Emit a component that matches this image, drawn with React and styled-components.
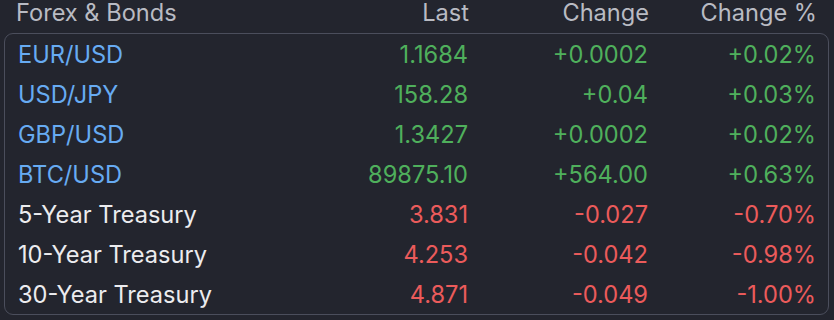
import React from 'react';
import styled, { createGlobalStyle } from 'styled-components';

const GlobalStyle = createGlobalStyle`
  html, body {
    margin: 0;
    background: #23252e;
  }
  body {
    font-family: Inter, "Noto Sans", sans-serif;
  }
`;

const Wrapper = styled.div`
  width: 834px;
  height: 320px;
  box-sizing: border-box;
  padding: 0 5px 0 4px;
  background: #23252e;
`;

const Header = styled.div`
  display: grid;
  grid-template-columns: 1fr 150px 180px 168px;
  height: 33px;
  align-items: start;
  padding: 0 12px;
  box-sizing: border-box;
  font-size: 23.6px;
  line-height: 25px;
  color: #b9bbc3;
`;

const HeaderCell = styled.div`
  text-align: ${(p) => (p.$left ? 'left' : 'right')};
  white-space: nowrap;
`;

const Panel = styled.div`
  border: 1.5px solid #4b4e5c;
  border-radius: 9px;
  padding: 0 12px 0 13px;
`;

const Row = styled.div`
  display: grid;
  grid-template-columns: 1fr 150px 180px 168px;
  height: 40px;
  align-items: center;
  font-size: 23.6px;
  padding-top: 1px;
  box-sizing: border-box;
`;

const Name = styled.div`
  color: ${(p) => (p.$link ? '#67abf2' : '#ececef')};
  white-space: nowrap;
`;

const Num = styled.div`
  text-align: right;
  color: ${(p) => (p.$up ? '#4fb05c' : '#eb5b5b')};
`;

const rows = [
  { name: 'EUR/USD', link: true, last: '1.1684', chg: '+0.0002', pct: '+0.02%' },
  { name: 'USD/JPY', link: true, last: '158.28', chg: '+0.04', pct: '+0.03%' },
  { name: 'GBP/USD', link: true, last: '1.3427', chg: '+0.0002', pct: '+0.02%' },
  { name: 'BTC/USD', link: true, last: '89875.10', chg: '+564.00', pct: '+0.63%' },
  { name: '5-Year Treasury', last: '3.831', chg: '-0.027', pct: '-0.70%' },
  { name: '10-Year Treasury', last: '4.253', chg: '-0.042', pct: '-0.98%' },
  { name: '30-Year Treasury', last: '4.871', chg: '-0.049', pct: '-1.00%' },
];

export default function App() {
  return (
    <Wrapper>
      <GlobalStyle />
      <Header>
        <HeaderCell $left>Forex &amp; Bonds</HeaderCell>
        <HeaderCell>Last</HeaderCell>
        <HeaderCell>Change</HeaderCell>
        <HeaderCell>Change %</HeaderCell>
      </Header>
      <Panel>
        {rows.map((r) => {
          const up = r.chg.startsWith('+');
          return (
            <Row key={r.name}>
              <Name $link={r.link}>{r.name}</Name>
              <Num $up={up}>{r.last}</Num>
              <Num $up={up}>{r.chg}</Num>
              <Num $up={up}>{r.pct}</Num>
            </Row>
          );
        })}
      </Panel>
    </Wrapper>
  );
}
